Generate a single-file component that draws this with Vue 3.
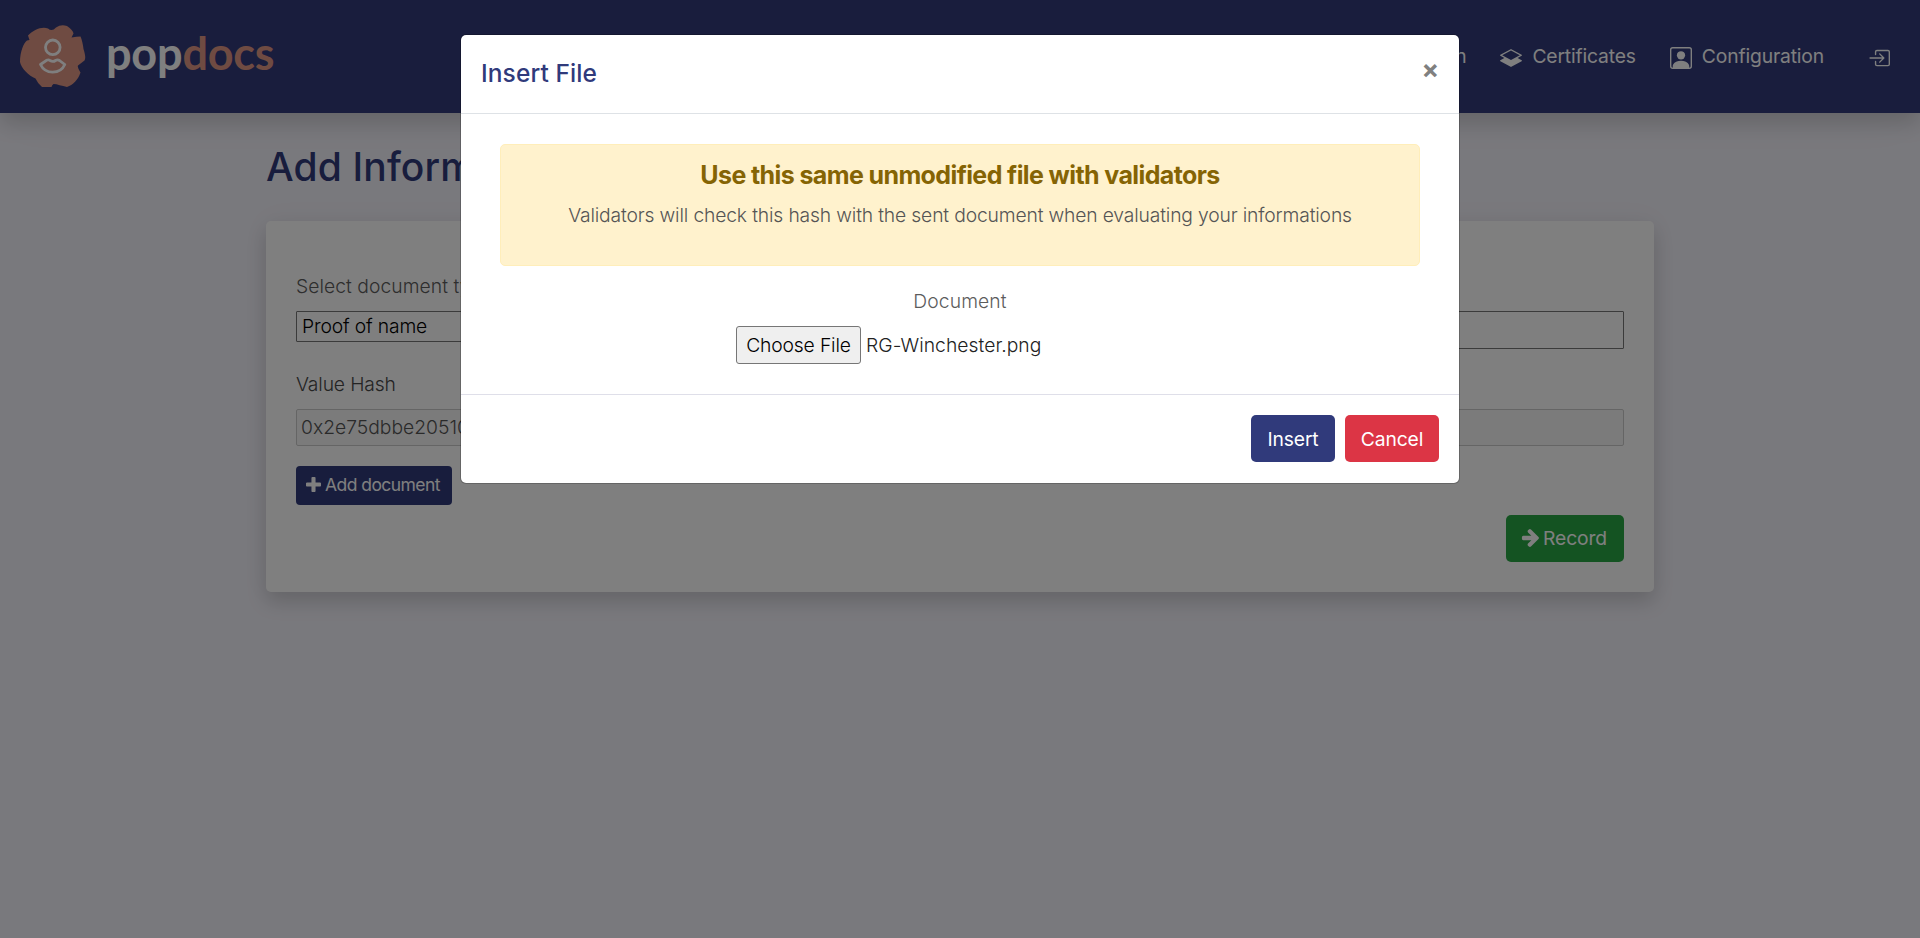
<script setup>
import { ref } from 'vue'

const documentType = ref('Proof of name')
const valueHash = ref('0x2e75dbbe20510')
const fileName = ref('RG-Winchester.png')
</script>

<template>
  <div class="page">
    <header class="navbar">
      <div class="brand">
        <svg class="brand-mark" width="66" height="63" viewBox="0 0 66 63" fill="none">
          <path fill="#de9684" d="M0 37C0 27 3.500 18 7 15.500L9.500 15 8 10.500C13 5 22 1 28 3.500Q32 7 36 2.500Q41-1 47 1Q53 5 53.500 8.500L51.500 12.500Q57 11.500 60.500 11.500C62 15 63 20 63.500 24C65 29 66 33 64.500 35.500L58 40.500Q57 42 60.500 47.500C58 55 53 60 47 62C42 61 37 59 33.500 59Q32 60 31.500 62L22 62Q18 59 15.500 53.500C9 51 1 43 0 37Z" />
          <circle cx="32.800" cy="22.300" r="7.300" stroke="#fff" stroke-width="2.800" />
          <path stroke="#fff" stroke-width="2.800" stroke-linejoin="round" d="M20.500 39.500L26.500 35.300Q28.500 34.300 30 35.500Q33 37.300 35.500 35.500Q37.500 34.200 39.500 35.500L44.800 39.500Q41.500 47 32.700 47.200Q24 47 20.500 39.500Z" />
        </svg>
        <span class="brand-name">pop<span class="brand-accent">docs</span></span>
      </div>
      <nav class="links">
        <a class="link">Information</a>
        <a class="link">
          <svg width="22" height="22" viewBox="0 0 16 16" fill="currentColor">
            <path d="M8.235 1.559a.5.5 0 0 0-.47 0l-7.500 4a.5.5 0 0 0 0 .882L3.188 8 .264 9.559a.5.5 0 0 0 0 .882l7.500 4a.5.5 0 0 0 .47 0l7.500-4a.5.5 0 0 0 0-.882L12.813 8l2.922-1.559a.5.5 0 0 0 0-.882l-7.500-4zM8 9.433 1.562 6 8 2.567 14.438 6 8 9.433z" />
          </svg>
          <span>Certificates</span>
        </a>
        <a class="link">
          <svg width="22" height="22" viewBox="0 0 16 16" fill="currentColor">
            <path d="M11 6a3 3 0 1 1-6 0 3 3 0 0 1 6 0z" />
            <path d="M2 0a2 2 0 0 0-2 2v12a2 2 0 0 0 2 2h12a2 2 0 0 0 2-2V2a2 2 0 0 0-2-2H2zm12 1a1 1 0 0 1 1 1v12a1 1 0 0 1-1 1v-1c0-1-1-4-6-4s-6 3-6 4v1a1 1 0 0 1-1-1V2a1 1 0 0 1 1-1h12z" />
          </svg>
          <span>Configuration</span>
        </a>
        <a class="link logout">
          <svg width="22" height="22" viewBox="0 0 16 16" fill="currentColor">
            <path d="M6 3.500a.5.5 0 0 1 .5-.5h8a.5.5 0 0 1 .5.5v9a.5.5 0 0 1-.5.5h-8a.5.5 0 0 1-.5-.5v-2a.5.5 0 0 0-1 0v2A1.500 1.500 0 0 0 6.500 14h8a1.500 1.500 0 0 0 1.500-1.500v-9A1.500 1.500 0 0 0 14.500 2h-8A1.500 1.500 0 0 0 5 3.500v2a.5.5 0 0 0 1 0v-2z" />
            <path d="M11.854 8.354a.5.5 0 0 0 0-.708l-3-3a.5.5 0 1 0-.708.708L10.293 7.500H1.500a.5.5 0 0 0 0 1h8.793l-2.147 2.146a.5.5 0 0 0 .708.708l3-3z" />
          </svg>
        </a>
      </nav>
    </header>

    <main class="content">
      <h1>Add Information</h1>
      <section class="card">
        <div class="columns">
          <div class="field">
            <label class="spaced">Select document type</label>
            <div class="select">{{ documentType }}</div>
          </div>
          <div class="field right">
            <div class="input"></div>
          </div>
        </div>
        <div class="field hash">
          <label class="dark">Value Hash</label>
          <div class="input disabled">{{ valueHash }}</div>
        </div>
        <button class="btn small primary">
          <svg width="15" height="15" viewBox="192 128 1408 1408" fill="currentColor">
            <path d="M1600 736v192q0 40-28 68t-68 28h-416v416q0 40-28 68t-68 28H800q-40 0-68-28t-28-68v-416H288q-40 0-68-28t-28-68V736q0-40 28-68t68-28h416V224q0-40 28-68t68-28h192q40 0 68 28t28 68v416h416q40 0 68 28t28 68z" />
          </svg>
          <span>Add document</span>
        </button>
        <div class="actions">
          <button class="btn success">
            <svg width="18" height="18" viewBox="64 181 1550 1558" fill="currentColor">
              <path d="M1611 960q0 54-37 91l-651 651q-39 37-91 37-51 0-90-37l-75-75q-38-38-38-91t38-91l293-293H256q-52 0-84.500-37.500T139 1024V896q0-53 32.500-90.500T256 768h704L667 474q-38-36-38-90t38-90l75-75q38-38 90-38 53 0 91 38l651 651q37 35 37 90z" />
            </svg>
            <span>Record</span>
          </button>
        </div>
      </section>
    </main>

    <div class="overlay">
      <div class="modal">
        <div class="modal-header">
          <h5>Insert File</h5>
          <span class="close">×</span>
        </div>
        <div class="modal-body">
          <div class="alert">
            <h4>Use this same unmodified file with validators</h4>
            <p>Validators will check this hash with the sent document when evaluating your informations</p>
          </div>
          <div class="doc-label">Document</div>
          <div class="file">
            <span class="file-button">Choose File</span>
            <span class="file-name">{{ fileName }}</span>
          </div>
        </div>
        <div class="modal-footer">
          <button class="btn primary insert">Insert</button>
          <button class="btn danger">Cancel</button>
        </div>
      </div>
    </div>
  </div>
</template>

<style>
body { margin: 0; }
</style>

<style scoped>
* { box-sizing: border-box; }
.page {
  position: relative;
  height: 938px;
  overflow: hidden;
  background: #f3f2fa;
  color: #5c5c5c;
  font: 300 19.300px/30px Inter, "Open Sans", sans-serif;
  letter-spacing: -0.15px;
}
.navbar {
  display: flex;
  justify-content: space-between;
  height: 113px;
  background: #323b7b;
  color: #fff;
  box-shadow: 0 10px 20px rgba(0, 0, 0, 0.15), 0 16px 48px -10px rgba(0, 0, 0, 0.04);
}
.brand { display: flex; padding: 25px 0 0 20px; }
.brand-name {
  margin-left: 20px;
  font: 700 45px/56px Lato, sans-serif;
  letter-spacing: -0.2px;
}
.brand-accent { color: #de9684; }
.links { display: flex; align-items: flex-start; padding: 41px 30px 0 0; font-weight: 400; }
.link { display: flex; align-items: flex-start; margin-left: 34px; }
.link svg { margin: 6px 10px 0 0; }
.link.logout { margin-left: 44px; }
.link.logout svg { margin-right: 0; }
.content { width: 1388px; margin: 0 auto; }
h1 {
  margin: 0;
  padding-top: 30px;
  color: #303a7b;
  font-size: 39px;
  font-weight: 500;
  line-height: 48px;
  letter-spacing: 0.15px;
}
.card {
  height: 371px;
  margin-top: 30px;
  padding: 50px 30px 30px;
  border-radius: 5px;
  background: #fff;
  box-shadow: 0 10px 20px rgba(0, 0, 0, 0.15), 0 0 30px rgba(0, 0, 0, 0.04);
}
.columns { display: grid; grid-template-columns: 1fr 1fr; gap: 30px; height: 98px; }
.field.right { padding-top: 40px; }
label { display: block; margin-bottom: 10px; }
.spaced { letter-spacing: 0.05px; }
.dark { color: #484848; }
.select {
  height: 31px;
  padding: 0 5px;
  border: 1px solid #767676;
  border-radius: 1px;
  color: #000;
  line-height: 29px;
}
.input { height: 38px; border: 1px solid #767676; border-radius: 1px; }
.input.disabled {
  padding: 0 4px;
  height: 37px;
  border-color: #cbcbcb;
  border-radius: 2px;
  background: #f7f7f7;
  color: #555;
  line-height: 35px;
  letter-spacing: 0;
}
.btn {
  display: inline-flex;
  align-items: center;
  justify-content: center;
  height: 47px;
  padding: 1px 0 0;
  border: 0;
  border-radius: 5px;
  color: #fff;
  font: 400 19.300px/32px Inter, "Open Sans", sans-serif;
  letter-spacing: -0.15px;
}
.btn svg { margin-right: 4px; }
.small {
  display: flex;
  width: 156px;
  height: 39px;
  margin-top: 20px;
  padding: 0 2px 1px 0;
  border-radius: 4px;
  font-size: 17.500px;
  letter-spacing: -0.55px;
}
.small svg { margin-bottom: 2px; }
.primary { background: #303a7b; }
.success { width: 118px; padding: 0 2px 1px 0; background: #28a745; }
.danger { width: 94px; background: #dc3545; }
.insert { width: 84px; }
.actions { display: flex; justify-content: flex-end; margin-top: 10px; }
.overlay { position: absolute; inset: 0; padding-top: 34px; background: rgba(0, 0, 0, 0.5); }
.modal {
  width: 1000px;
  height: 450px;
  margin: 0 auto;
  border: 1px solid rgba(0, 0, 0, 0.2);
  border-radius: 6px;
  background: #fff;
  background-clip: padding-box;
}
.modal-header {
  display: flex;
  justify-content: space-between;
  height: 79px;
  padding: 20px;
  border-bottom: 1px solid #dee2e6;
}
h5 { margin: 0; color: #303a7b; font-size: 24.500px; font-weight: 500; line-height: 37px; letter-spacing: 0.1px; }
.close { font-size: 26px; font-weight: 700; line-height: 30px; color: #808080; }
.modal-body { height: 280px; padding: 30px 39px; text-align: center; }
.alert {
  height: 122px;
  padding: 15px 24px;
  border: 1px solid #ffeeba;
  border-radius: 5px;
  background: #fff2cd;
}
h4 { margin: 0 0 10px; color: #856404; font-size: 25px; font-weight: 700; line-height: 30px; letter-spacing: -0.61px; }
p { margin: 0; color: #555; white-space: nowrap; letter-spacing: -0.155px; }
.doc-label { margin: 20px 0 10px; letter-spacing: 0.1px; }
.file { display: flex; align-items: center; margin-left: 236px; color: #222; }
.file-button {
  width: 125px;
  height: 38px;
  border: 1px solid #767676;
  border-radius: 3px;
  background: #efefef;
  color: #000;
  line-height: 36px;
}
.file-name { margin-left: 5px; letter-spacing: 0.05px; }
.modal-footer {
  display: flex;
  justify-content: flex-end;
  gap: 10px;
  padding: 20px;
  border-top: 1px solid #dfdfe9;
}
</style>
